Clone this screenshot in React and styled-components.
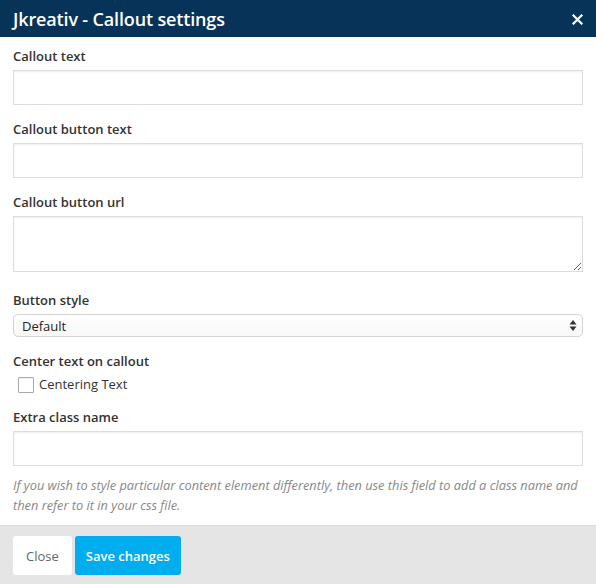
import React from 'react';
import styled, { createGlobalStyle } from 'styled-components';

const GlobalStyle = createGlobalStyle`
  html, body {
    margin: 0;
    padding: 0;
    background: #fff;
  }
  body {
    font-family: "Open Sans", "Liberation Sans", Arial, sans-serif;
    color: #333;
  }
  * {
    box-sizing: border-box;
  }
`;

const Dialog = styled.div`
  width: 596px;
  height: 584px;
  display: flex;
  flex-direction: column;
  background: #fff;
`;

const Header = styled.div`
  height: 37px;
  flex: none;
  background: #083358;
  color: #fff;
  display: flex;
  align-items: center;
  justify-content: space-between;
  padding: 0 13px;
`;

const Title = styled.h1`
  margin: 0;
  font-size: 18px;
  font-weight: 600;
  letter-spacing: -0.15px;
`;

const CloseIcon = styled.button`
  border: 0;
  background: none;
  padding: 0;
  width: 12px;
  height: 12px;
  display: flex;
  align-items: center;
  justify-content: center;
  cursor: pointer;
  margin-top: 2px;
`;

const Body = styled.div`
  flex: 1;
  padding: 10px 13px 9px;
`;

const Field = styled.div`
  padding-bottom: ${(p) => p.$gap ?? 15}px;
`;

const Label = styled.label`
  display: block;
  font-size: 13px;
  font-weight: 600;
  line-height: 18px;
  color: #333;
  margin-bottom: 5px;
`;

const TextInput = styled.input`
  display: block;
  width: 100%;
  height: 35px;
  border: 1px solid #ddd;
  box-shadow: inset 0 1px 2px rgba(0, 0, 0, 0.07);
  background: #fff;
  font: inherit;
  font-size: 13px;
  padding: 0 8px;
  outline: none;
`;

const TextArea = styled.textarea`
  display: block;
  width: 100%;
  height: 56px;
  border: 1px solid #ddd;
  box-shadow: inset 0 1px 2px rgba(0, 0, 0, 0.07);
  background: #fff;
  font: inherit;
  font-size: 13px;
  padding: 6px 8px;
  outline: none;
`;

const SelectWrap = styled.div`
  position: relative;
`;

const Select = styled.select`
  display: block;
  width: 100%;
  height: 23px;
  appearance: none;
  -webkit-appearance: none;
  border: 1px solid #d4d4d4;
  border-radius: 5px;
  background: linear-gradient(#fff, #f7f7f7);
  font: inherit;
  font-size: 13px;
  color: #222;
  padding: 0 24px 0 8px;
  outline: none;
`;

const Arrows = styled.svg`
  position: absolute;
  right: 6px;
  top: 6px;
  pointer-events: none;
`;

const CheckRow = styled.label`
  display: flex;
  align-items: center;
  gap: 5px;
  padding-left: 5px;
  font-size: 13px;
  line-height: 18px;
  color: #333;
  margin-top: 1px;
`;

const Box = styled.span`
  width: 16px;
  height: 16px;
  border: 1px solid #aaa;
  border-radius: 1px;
  background: #fff;
  box-shadow: inset 0 1px 1px rgba(0, 0, 0, 0.06);
  margin-top: 2px;
`;

const Help = styled.p`
  margin: 9px 0 0;
  font-size: 12.8px;
  font-style: italic;
  line-height: 20px;
  color: #888;
`;

const Footer = styled.div`
  flex: none;
  height: 59px;
  background: #e5e5e5;
  border-top: 1px solid #ddd;
  display: flex;
  align-items: flex-start;
  gap: 3px;
  padding: 10px 13px 0;
`;

const Button = styled.button`
  height: 39px;
  border: 0;
  border-radius: 3px;
  padding: 0 ${(p) => (p.$primary ? 11 : 13)}px;
  font-family: inherit;
  font-size: 13px;
  font-weight: ${(p) => (p.$primary ? 600 : 400)};
  background: ${(p) => (p.$primary ? '#00aeef' : '#fff')};
  color: ${(p) => (p.$primary ? '#fff' : '#666')};
  cursor: pointer;
`;

export default function App() {
  return (
    <>
      <GlobalStyle />
      <Dialog>
        <Header>
          <Title>Jkreativ - Callout settings</Title>
          <CloseIcon aria-label="Close">
            <svg width="11" height="11" viewBox="0 0 11 11">
              <path d="M1.5 1.5L9.5 9.5M9.5 1.5L1.5 9.5" stroke="#fff" strokeWidth="2.2" strokeLinecap="square" />
            </svg>
          </CloseIcon>
        </Header>

        <Body>
          <Field>
            <Label>Callout text</Label>
            <TextInput type="text" />
          </Field>
          <Field>
            <Label>Callout button text</Label>
            <TextInput type="text" />
          </Field>
          <Field $gap={19}>
            <Label>Callout button url</Label>
            <TextArea />
          </Field>
          <Field>
            <Label>Button style</Label>
            <SelectWrap>
              <Select defaultValue="default">
                <option value="default">Default</option>
              </Select>
              <Arrows width="8" height="11" viewBox="0 0 8 11">
                <path d="M4 0L7.5 4.5H0.5Z" fill="#333" />
                <path d="M4 11L7.5 6.5H0.5Z" fill="#333" />
              </Arrows>
            </SelectWrap>
          </Field>
          <Field>
            <Label>Center text on callout</Label>
            <CheckRow>
              <Box />
              Centering Text
            </CheckRow>
          </Field>
          <Field $gap={0}>
            <Label>Extra class name</Label>
            <TextInput type="text" />
            <Help>
              If you wish to style particular content element differently, then use this field to add a class name and
              then refer to it in your css file.
            </Help>
          </Field>
        </Body>

        <Footer>
          <Button>Close</Button>
          <Button $primary>Save changes</Button>
        </Footer>
      </Dialog>
    </>
  );
}
